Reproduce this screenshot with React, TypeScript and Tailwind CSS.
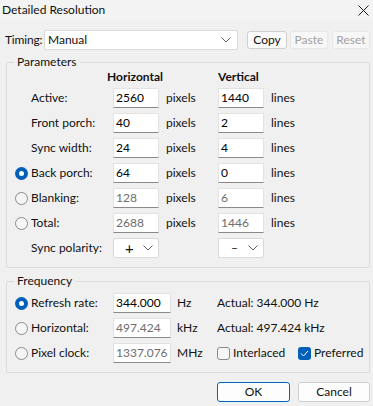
import React from "react";

const font = { fontFamily: "Lato, 'Liberation Sans', sans-serif" };

function Chevron() {
  return (
    <svg width="10" height="6" viewBox="0 0 10 6" fill="none" stroke="#5f5f5f" strokeWidth="1">
      <path d="M0.5 0.5 L5 5 L9.5 0.5" />
    </svg>
  );
}

function Radio({ on }: { on?: boolean }) {
  return on ? (
    <span className="flex h-[13px] w-[13px] items-center justify-center rounded-full bg-[#005fb8]">
      <span className="h-[5px] w-[5px] rounded-full bg-white" />
    </span>
  ) : (
    <span className="h-[13px] w-[13px] rounded-full border border-[#8a8a8a] bg-[#f6f6f6]" />
  );
}

function Field({ value, w, dim }: { value: string; w: string; dim?: boolean }) {
  return (
    <div
      className={`${w} flex h-[20px] items-center border border-[#e3e3e3] border-b-[#8a8a8a] bg-white pl-[2px] ${dim ? "text-[#6d6d6d]" : "text-black"}`}
    >
      {value}
    </div>
  );
}

const rows = [
  { label: "Active:", h: "2560", v: "1440", radio: null, dim: false },
  { label: "Front porch:", h: "40", v: "2", radio: null, dim: false },
  { label: "Sync width:", h: "24", v: "4", radio: null, dim: false },
  { label: "Back porch:", h: "64", v: "0", radio: true, dim: false },
  { label: "Blanking:", h: "128", v: "6", radio: false, dim: true },
  { label: "Total:", h: "2688", v: "1446", radio: false, dim: true },
];

const freq = [
  { label: "Refresh rate:", value: "344.000", unit: "Hz", on: true },
  { label: "Horizontal:", value: "497.424", unit: "kHz", on: false },
  { label: "Pixel clock:", value: "1337.076", unit: "MHz", on: false },
];

export default function App() {
  return (
    <div className="h-[406px] w-[373px] overflow-hidden bg-[#f0f0f0] text-[12px] leading-[14px] text-[#111]" style={font}>
      {/* title bar */}
      <div className="flex h-[20px] items-center justify-between bg-[#f3f3f3] pl-[2px] pr-[4px]">
        <span>Detailed Resolution</span>
        <svg width="11" height="11" viewBox="0 0 11 11" stroke="#1a1a1a" strokeWidth="1">
          <path d="M0.5 0.5 L10.5 10.5 M10.5 0.5 L0.5 10.5" />
        </svg>
      </div>

      {/* timing row */}
      <div className="mt-[10px] flex h-[20px] items-center pl-[5px]">
        <span className="w-[39px] tracking-[-0.2px]">Timing:</span>
        <div className="flex h-[20px] w-[194px] items-center justify-between rounded-[2px] border border-[#d9d9d9] bg-white pl-[3px] pr-[6px]">
          <span>Manual</span>
          <Chevron />
        </div>
        <button className="ml-[9px] h-[18px] w-[40px] rounded-[3px] border border-[#cfcfcf] bg-[#fbfbfb]">Copy</button>
        <button className="ml-[3px] h-[18px] w-[38px] rounded-[3px] border border-[#e8e8e8] bg-[#f7f7f7] text-[#a2a2a2]">Paste</button>
        <button className="ml-[4px] h-[18px] w-[38px] rounded-[3px] border border-[#e8e8e8] bg-[#f7f7f7] text-[#a2a2a2]">Reset</button>
      </div>

      {/* parameters */}
      <fieldset className="ml-[6px] mt-[5px] h-[213px] w-[364px] rounded-[2px] border border-[#dcdcdc]">
        <legend className="ml-[7px] px-[3px] leading-[14px]">Parameters</legend>
        <div className="mt-[1px] flex h-[14px] items-center font-bold">
          <span className="ml-[100px] w-[111px]">Horizontal</span>
          <span>Vertical</span>
        </div>
        <div className="mt-[4px] flex flex-col gap-[5px] pl-[8px]">
          {rows.map((r) => (
            <div key={r.label} className="flex h-[20px] items-center">
              <span className="flex w-[16px]">{r.radio !== null && <Radio on={r.radio} />}</span>
              <span className="w-[82px]">{r.label}</span>
              <Field value={r.h} w="w-[46px]" dim={r.dim} />
              <span className="ml-[7px] w-[52px]">pixels</span>
              <Field value={r.v} w="w-[46px]" dim={r.dim} />
              <span className="ml-[7px]">lines</span>
            </div>
          ))}
          <div className="flex h-[20px] items-center">
            <span className="w-[16px]" />
            <span className="w-[82px]">Sync polarity:</span>
            <div className="flex h-[20px] w-[46px] items-center justify-between rounded-[2px] border border-[#d9d9d9] bg-white pl-[11px] pr-[5px]">
              <span className="text-[15px]">+</span>
              <Chevron />
            </div>
            <span className="w-[59px]" />
            <div className="flex h-[20px] w-[46px] items-center justify-between rounded-[2px] border border-[#d9d9d9] bg-white pl-[12px] pr-[5px]">
              <span>–</span>
              <Chevron />
            </div>
          </div>
        </div>
      </fieldset>

      {/* frequency */}
      <fieldset className="ml-[6px] mt-[6px] h-[99px] w-[364px] rounded-[2px] border border-[#dcdcdc]">
        <legend className="ml-[7px] px-[3px] leading-[14px]">Frequency</legend>
        <div className="mt-[5px] flex flex-col gap-[5px] pl-[8px]">
          {freq.map((f, i) => (
            <div key={f.label} className="flex h-[20px] items-center">
              <span className="flex w-[16px]">
                <Radio on={f.on} />
              </span>
              <span className="w-[82px]">{f.label}</span>
              <Field value={f.value} w="w-[58px]" dim={!f.on} />
              <span className="ml-[6px] w-[40px]">{f.unit}</span>
              {i === 0 && <span>Actual: 344.000 Hz</span>}
              {i === 1 && <span>Actual: 497.424 kHz</span>}
              {i === 2 && (
                <div className="flex items-center">
                  <span className="h-[13px] w-[13px] rounded-[3px] border border-[#8a8a8a] bg-[#f6f6f6]" />
                  <span className="ml-[3px] w-[65px]">Interlaced</span>
                  <span className="flex h-[13px] w-[13px] items-center justify-center rounded-[3px] bg-[#005fb8]">
                    <svg width="9" height="7" viewBox="0 0 9 7" fill="none" stroke="white" strokeWidth="1">
                      <path d="M1 3.5 L3.5 6 L8 1" />
                    </svg>
                  </span>
                  <span className="ml-[3px]">Preferred</span>
                </div>
              )}
            </div>
          ))}
        </div>
      </fieldset>

      {/* buttons */}
      <div className="mt-[9px] flex justify-end gap-[8px] pr-[3px]">
        <button className="h-[20px] w-[73px] rounded-[3px] border border-[#0067c0] bg-[#fdfdfd]">OK</button>
        <button className="h-[20px] w-[72px] rounded-[3px] border border-[#d0d0d0] bg-[#fdfdfd]">Cancel</button>
      </div>
    </div>
  );
}
